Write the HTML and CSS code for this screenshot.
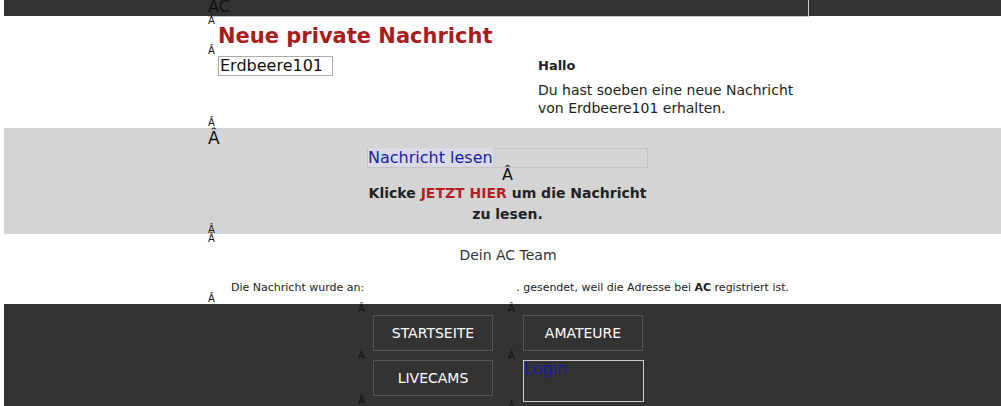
FILE: index.html
```html
<!DOCTYPE html>
<html lang="de">
<head>
<meta charset="utf-8">
<title>Neue private Nachricht</title>
<link rel="stylesheet" href="styles.css">
</head>
<body>
<div class="band band-top">
  <div class="logo">AC</div>
</div>

<div class="inner intro">
  <span class="nb">Â</span>
  <div class="cols">
    <div class="left">
      <h1 class="title">Neue private Nachricht</h1>
      <span class="nb">Â</span>
      <div class="user">Erdbeere101</div>
    </div>
    <div class="right">
      <p class="hallo">Hallo</p>
      <p class="msg">Du hast soeben eine neue Nachricht von Erdbeere101 erhalten.</p>
    </div>
  </div>
  <span class="nb nb-end">Â</span>
</div>

<div class="band band-grey">
  <div class="inner">
    <span class="nb nb-big">Â</span>
    <div class="cta">
      <div class="readbox"><a class="readlink" href="#">Nachricht lesen</a></div>
      <span class="nb-mid">Â</span>
      <p class="click">Klicke <span class="hot">JETZT HIER</span> um die Nachricht zu lesen.</p>
    </div>
    <span class="nb nb-low">Â</span>
  </div>
</div>

<div class="inner outro">
  <span class="nb">Â</span>
  <p class="team">Dein AC Team</p>
  <p class="notice">Die Nachricht wurde an:<span class="gap"></span>. gesendet, weil die Adresse bei <b>AC</b> registriert ist.</p>
  <span class="nb">Â</span>
</div>

<div class="band band-foot">
  <div class="menu">
    <div class="menu-col">
      <span class="nb nb-first">Â</span>
      <a class="btn" href="#">STARTSEITE</a>
      <span class="nb nb-gap">Â</span>
      <a class="btn" href="#">LIVECAMS</a>
      <span class="nb">Â</span>
    </div>
    <div class="menu-col">
      <span class="nb nb-first">Â</span>
      <a class="btn" href="#">AMATEURE</a>
      <span class="nb nb-gap">Â</span>
      <div class="loginbox"><a class="login" href="#">Login</a></div>
      <span class="nb">Â</span>
    </div>
  </div>
</div>
</body>
</html>
```

FILE: styles.css
```css
html, body {
  background: #fff;
}
body {
  margin: 0 0 0 4px;
  font-family: "DejaVu Sans", sans-serif;
  color: #222;
}
p, h1 {
  margin: 0;
}
a {
  text-decoration: none;
}
.band {
  background: #333;
}
.band-top {
  height: 16px;
}
.logo {
  box-sizing: border-box;
  margin-left: 204px;
  width: 601px;
  height: 17px;
  border-right: 1px solid #c8c8c8;
  border-bottom: 1px solid #c8c8c8;
  font-size: 16px;
  line-height: 14px;
  color: #111;
}
.inner {
  margin-left: 204px;
  width: 600px;
}
.nb {
  display: block;
  font-size: 10px;
  line-height: 10px;
  height: 10px;
  color: #111;
}
.cols {
  display: flex;
}
.left {
  width: 330px;
}
.title {
  font-size: 21px;
  font-weight: bold;
  color: #a81c1c;
  line-height: 20px;
  padding-left: 10px;
}
.user {
  display: inline-block;
  vertical-align: top;
  margin-left: 10px;
  border: 1px solid #aaa;
  width: 112px;
  height: 18px;
  font-size: 16px;
  line-height: 18px;
  color: #111;
  padding-left: 1px;
}
.right {
  width: 262px;
  padding-top: 32px;
}
.hallo {
  font-size: 13px;
  font-weight: bold;
  line-height: 16px;
  margin-bottom: 7px;
}
.msg {
  font-size: 14px;
  line-height: 18px;
}
.nb-end {
  margin-top: 1px;
}
.band-grey {
  background: #d4d4d4;
  height: 106px;
}
.nb-big {
  font-size: 17px;
  line-height: 20px;
  height: 20px;
}
.cta {
  margin-left: 159px;
  width: 281px;
  text-align: center;
}
.readbox {
  box-sizing: border-box;
  height: 20px;
  border: 1px solid #c4c4c4;
  text-align: left;
  font-size: 16px;
  line-height: 18px;
}
.readlink {
  color: #1c1ca6;
  background: #d9dae6;
}
.nb-mid {
  display: block;
  font-size: 16px;
  line-height: 14px;
  color: #111;
}
.click {
  font-size: 14px;
  font-weight: bold;
  line-height: 21px;
  margin-top: 1px;
}
.hot {
  color: #b41f1f;
}
.team {
  text-align: center;
  font-size: 14px;
  line-height: 20px;
  color: #333;
  margin-top: 1px;
}
.notice {
  font-size: 11px;
  line-height: 12px;
  margin-top: 17px;
  padding-left: 23px;
  color: #222;
  white-space: nowrap;
}
.gap {
  display: inline-block;
  width: 152px;
}
.band-foot {
  height: 110px;
}
.menu {
  display: flex;
  margin-left: 354px;
}
.menu-col {
  width: 150px;
}
.menu-col .nb-first {
  height: 11px;
}
.menu-col .nb-gap {
  height: 9px;
  line-height: 9px;
}
.btn {
  display: block;
  box-sizing: border-box;
  margin-left: 15px;
  width: 120px;
  height: 36px;
  border: 1px solid #555;
  color: #fff;
  font-size: 14px;
  line-height: 34px;
  text-align: center;
}
.loginbox {
  box-sizing: border-box;
  margin-left: 15px;
  width: 121px;
  height: 42px;
  border: 1px solid #c8c8c8;
}
.login {
  display: block;
  color: #1c1ca6;
  font-size: 16px;
  line-height: 16px;
}
```
